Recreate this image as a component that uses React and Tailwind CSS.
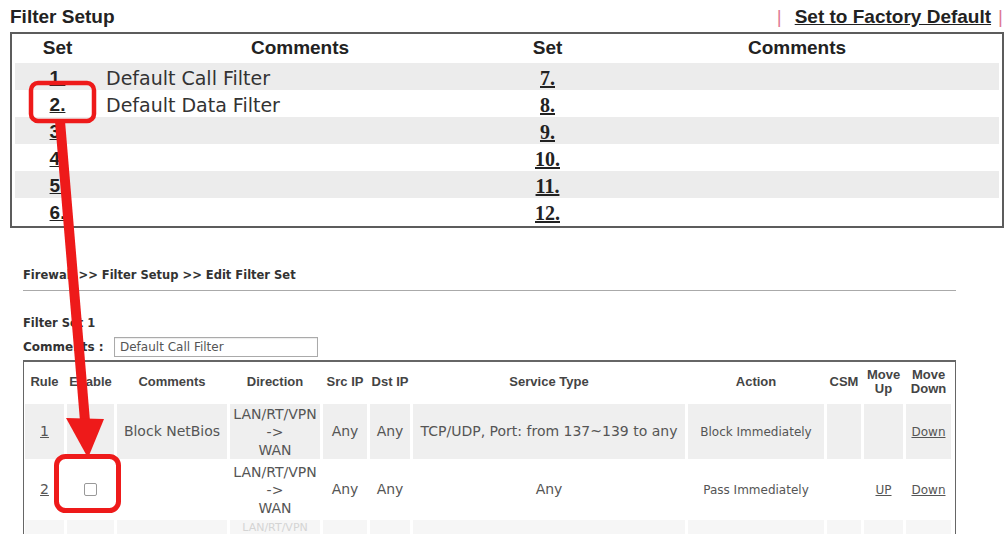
import React from "react";

const dv = "font-['DejaVu_Sans',Verdana,sans-serif]";
const ar = "font-['Liberation_Sans',Arial,sans-serif]";
const sr = "font-['Liberation_Serif','Times_New_Roman',serif]";

const cols =
  "grid grid-cols-[39px_47px_110px_90px_44px_40px_272px_136px_34px_39px_45px] gap-x-[3px]";

function Dir() {
  return (
    <div className="text-center leading-[18px] text-[14px] text-[#555]">
      LAN/RT/VPN
      <br />
      -&gt;
      <br />
      WAN
    </div>
  );
}

function Cell({ children, bg, className = "" }) {
  return (
    <div className={`flex items-center justify-center h-full ${bg} ${className}`}>{children}</div>
  );
}

export default function App() {
  const left = ["1.", "2.", "3.", "4.", "5.", "6."];
  const right = ["7.", "8.", "9.", "10.", "11.", "12."];
  const comments = ["Default Call Filter", "Default Data Filter", "", "", "", ""];

  return (
    <div className="relative w-[1006px] h-[534px] overflow-hidden bg-white text-[#222]">
      {/* Title row */}
      <div className={`h-[32px] flex items-center justify-between pl-[10px] pr-[3px] pt-[1px] ${ar}`}>
        <div className="text-[19px] font-bold leading-none">Filter Setup</div>
        <div className="flex items-center text-[19px] font-bold leading-none">
          <span className="text-[#e07a94] font-normal">|</span>
          <span className="ml-[13px] underline">Set to Factory Default</span>
          <span className="ml-[7px] text-[#e07a94] font-normal">|</span>
        </div>
      </div>

      {/* Filter sets box */}
      <div className="ml-[10px] w-[994px] border-2 border-[#5c5c5c] px-[3px] pb-[1px]">
        <div className={`grid grid-cols-[85px_400px_95px_1fr] h-[29px] items-center text-[19px] font-bold ${ar}`}>
          <div className="text-center">Set</div>
          <div className="text-center">Comments</div>
          <div className="text-center">Set</div>
          <div className="text-center">Comments</div>
        </div>
        {left.map((l, i) => (
          <div
            key={l}
            className={`grid grid-cols-[85px_400px_95px_1fr] h-[27px] items-center ${i % 2 === 0 ? "bg-[#ececec]" : "bg-white"}`}
          >
            <div className={`text-center text-[19px] font-bold underline ${ar}`}>{l}</div>
            <div className={`pl-[6px] text-[19px] text-[#333] ${dv}`}>{comments[i]}</div>
            <div className={`text-center text-[20px] font-bold underline ${sr}`}>{right[i]}</div>
            <div></div>
          </div>
        ))}
      </div>

      {/* Edit filter set */}
      <div className="ml-[23px] w-[933px]">
        <div className={`mt-[37px] h-[20px] leading-[20px] text-[11.5px] font-bold text-[#333] ${dv}`}>
          Firewall &gt;&gt; Filter Setup &gt;&gt; Edit Filter Set
        </div>
        <div className="mt-[5px] border-t border-[#aaa]"></div>
        <div className={`mt-[23px] h-[18px] leading-[18px] text-[11.5px] font-bold text-[#333] ${dv}`}>
          Filter Set 1
        </div>
        <div className={`mt-[4px] h-[22px] flex items-center text-[12px] text-[#333] ${dv}`}>
          <span className="font-bold w-[91px]">Comments :</span>
          <div className="h-[20px] w-[204px] border border-[#aaa] shadow-[inset_0_1px_1px_rgba(0,0,0,0.08)] flex items-center pl-[5px] text-[#555] font-normal">
            Default Call Filter
          </div>
        </div>

        <div className="mt-[2px] border-t-2 border-l border-r border-[#666] pl-[1px] h-[200px]">
          {/* header */}
          <div className={`${cols} h-[39px] items-center text-[13px] font-bold text-[#444] ${ar}`}>
            <div className="text-center">Rule</div>
            <div className="text-center">Enable</div>
            <div className="text-center">Comments</div>
            <div className="text-center">Direction</div>
            <div className="text-center">Src IP</div>
            <div className="text-center">Dst IP</div>
            <div className="text-center">Service Type</div>
            <div className="text-center">Action</div>
            <div className="text-center">CSM</div>
            <div className="text-center leading-[14px]">Move<br />Up</div>
            <div className="text-center leading-[14px]">Move<br />Down</div>
          </div>

          {/* row 1 */}
          <div className={`${cols} mt-[3px] h-[55px] text-[14px] text-[#555] ${dv}`}>
            <Cell bg="bg-[#efefef]"><span className="underline">1</span></Cell>
            <Cell bg="bg-[#efefef]"></Cell>
            <Cell bg="bg-[#efefef]">Block NetBios</Cell>
            <Cell bg="bg-[#efefef]"><Dir /></Cell>
            <Cell bg="bg-[#efefef]">Any</Cell>
            <Cell bg="bg-[#efefef]">Any</Cell>
            <Cell bg="bg-[#efefef]" className="whitespace-nowrap">TCP/UDP, Port: from 137~139 to any</Cell>
            <Cell bg="bg-[#efefef]" className="text-[12px] whitespace-nowrap">Block Immediately</Cell>
            <Cell bg="bg-[#efefef]"></Cell>
            <Cell bg="bg-[#efefef]"></Cell>
            <Cell bg="bg-[#efefef]" className="text-[12px]"><span className="underline">Down</span></Cell>
          </div>

          {/* row 2 */}
          <div className={`${cols} mt-[3px] h-[55px] text-[14px] text-[#555] ${dv}`}>
            <Cell bg="bg-white"><span className="underline">2</span></Cell>
            <Cell bg="bg-white">
              <span className="block w-[13px] h-[13px] border border-[#999] rounded-[2px] bg-white"></span>
            </Cell>
            <Cell bg="bg-white"></Cell>
            <Cell bg="bg-white"><Dir /></Cell>
            <Cell bg="bg-white">Any</Cell>
            <Cell bg="bg-white">Any</Cell>
            <Cell bg="bg-white">Any</Cell>
            <Cell bg="bg-white" className="text-[12px] whitespace-nowrap">Pass Immediately</Cell>
            <Cell bg="bg-white"></Cell>
            <Cell bg="bg-white" className="text-[12px]"><span className="underline">UP</span></Cell>
            <Cell bg="bg-white" className="text-[12px]"><span className="underline">Down</span></Cell>
          </div>

          {/* row 3 (cut off at the bottom edge) */}
          <div className={`${cols} mt-[3px] h-[14px] text-[11px] ${dv}`}>
            <div className="bg-[#f6f6f6]"></div>
            <div className="bg-[#f6f6f6]"></div>
            <div className="bg-[#f6f6f6]"></div>
            <div className="bg-[#f6f6f6] text-center leading-[14px] pt-[1px] text-[#d4d4d4]">LAN/RT/VPN</div>
            <div className="bg-[#f6f6f6]"></div>
            <div className="bg-[#f6f6f6]"></div>
            <div className="bg-[#f6f6f6]"></div>
            <div className="bg-[#f6f6f6]"></div>
            <div className="bg-[#f6f6f6]"></div>
            <div className="bg-[#f6f6f6]"></div>
            <div className="bg-[#f6f6f6]"></div>
          </div>
        </div>
      </div>

      {/* Red annotation overlay */}
      <svg
        className="absolute left-0 top-0 pointer-events-none"
        width="1006"
        height="534"
        viewBox="0 0 1006 534"
      >
        <polygon points="55,121 65,121 90,421 80,421" fill="#ee1a1a" />
        <polygon points="66,418 104,419 88,458" fill="#ee1a1a" />
        <rect x="31" y="83" width="63" height="38" rx="7" fill="none" stroke="#ee1a1a" strokeWidth="4.5" />
        <rect x="56.5" y="456.5" width="62" height="54" rx="9" fill="none" stroke="#ee1a1a" strokeWidth="5" />
      </svg>
    </div>
  );
}
